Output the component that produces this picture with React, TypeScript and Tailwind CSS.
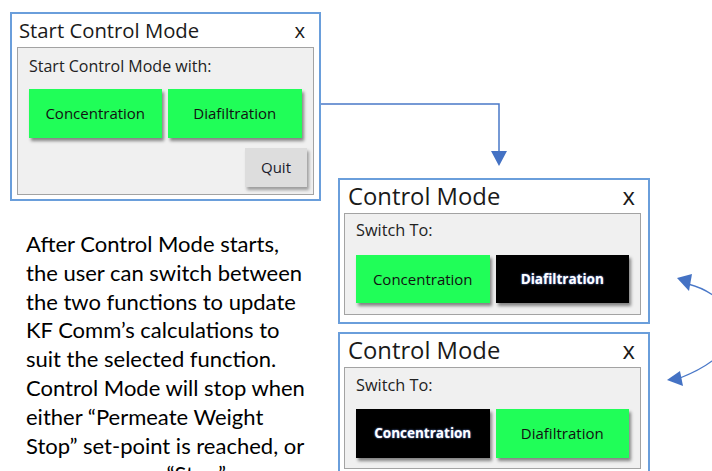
import type { ReactNode } from "react";

const ui = "font-['Open_Sans','Noto_Sans',sans-serif]";

function Btn({ label, on, className = "" }: { label: string; on: boolean; className?: string }) {
  return (
    <div
      className={`flex items-center justify-center shadow-[2px_3px_3px_rgba(0,0,0,0.45)] ${
        on ? "bg-[#20fe58] text-[15px] text-[#111]" : "bg-black text-[13.5px] font-bold text-white [text-shadow:0_0_2px_#7aa0ff]"
      } ${className}`}
    >
      {label}
    </div>
  );
}

function Dialog({
  title,
  children,
  className = "",
  titleClass = "",
  panelClass = "",
}: {
  title: string;
  children: ReactNode;
  className?: string;
  titleClass?: string;
  panelClass?: string;
}) {
  return (
    <div className={`border-2 border-[#6a9edb] bg-white ${ui} ${className}`}>
      <div className={`flex h-[33px] items-center justify-between text-[#1a1a1a] ${titleClass}`}>
        <span>{title}</span>
        <span>x</span>
      </div>
      <div className={`border border-[#a3a3a3] bg-[#f0f0f0] ${panelClass}`}>{children}</div>
    </div>
  );
}

const paragraph = [
  "After Control Mode starts,",
  "the user can switch between",
  "the two functions to update",
  "KF Comm’s calculations to",
  "suit the selected function.",
  "Control Mode will stop when",
  "either “Permeate Weight",
  "Stop” set-point is reached, or",
  "a user presses “Stop”.",
];

export default function App() {
  return (
    <div className="relative flex h-[471px] w-[712px] overflow-hidden bg-white">
      {/* left column */}
      <div className="w-[338px] shrink-0 pt-[12px]">
        <Dialog
          title="Start Control Mode"
          className="ml-[10px] w-[311px]"
          titleClass="pl-[7px] pr-[14px] text-[20.3px]"
          panelClass="mx-[5px] mb-[4px] px-[11px] pt-[8px] pb-[7px]"
        >
          <div className="h-[20px] text-[16px] leading-[20px] text-[#222]">Start Control Mode with:</div>
          <div className="mt-[13px] flex gap-[6px]">
            <Btn label="Concentration" on className="h-[49px] w-[133px]" />
            <Btn label="Diafiltration" on className="h-[49px] w-[135px]" />
          </div>
          <div className="mt-[10px] flex justify-end">
            <div className="mr-[-5px] flex h-[39px] w-[62px] items-center justify-center bg-[#dddddd] text-[15px] text-[#1a1a2a] shadow-[2px_3px_3px_rgba(0,0,0,0.35)]">
              Quit
            </div>
          </div>
        </Dialog>

        <div className="mt-[29px] pl-[26px] font-['Lato','Liberation_Sans',sans-serif] text-[22px] leading-[28.8px] text-black">
          {paragraph.map((line) => (
            <div key={line} className="whitespace-nowrap">
              {line}
            </div>
          ))}
        </div>
      </div>

      {/* right column */}
      <div className="pt-[178px]">
        <Dialog
          title="Control Mode"
          className="w-[312px]"
          titleClass="pl-[8px] pr-[13px] text-[23.8px]"
          panelClass="ml-[4px] mr-[7px] mb-[7px] px-[11px] pt-[6px] pb-[11px]"
        >
          <div className="h-[20px] text-[16.3px] leading-[20px] text-[#222]">Switch To:</div>
          <div className="mt-[15px] flex gap-[6px]">
            <Btn label="Concentration" on className="h-[48px] w-[135px]" />
            <Btn label="Diafiltration" on={false} className="h-[48px] w-[135px]" />
          </div>
        </Dialog>
        <Dialog
          title="Control Mode"
          className="mt-[8px] w-[312px]"
          titleClass="pl-[8px] pr-[13px] text-[23.8px]"
          panelClass="ml-[4px] mr-[7px] mb-[7px] px-[11px] pt-[7px] pb-[10px]"
        >
          <div className="h-[20px] text-[16.3px] leading-[20px] text-[#222]">Switch To:</div>
          <div className="mt-[14px] flex gap-[6px]">
            <Btn label="Concentration" on={false} className="h-[49px] w-[135px]" />
            <Btn label="Diafiltration" on className="h-[49px] w-[135px]" />
          </div>
        </Dialog>
      </div>

      {/* connector arrows */}
      <svg className="pointer-events-none absolute inset-0" width="712" height="471" viewBox="0 0 712 471">
        <polyline points="321,104 499,104 499,152" fill="none" stroke="#4a78c8" strokeWidth="1.5" />
        <polygon points="491,151 507,151 499,166" fill="#4472c4" />
        <path d="M 688 284 C 735 296, 762 346, 680 378" fill="none" stroke="#4a78c8" strokeWidth="1.3" />
        <polygon points="677,278 692,274 689,291" fill="#4472c4" />
        <polygon points="667,380 680,371 683,386" fill="#4472c4" />
      </svg>
    </div>
  );
}
